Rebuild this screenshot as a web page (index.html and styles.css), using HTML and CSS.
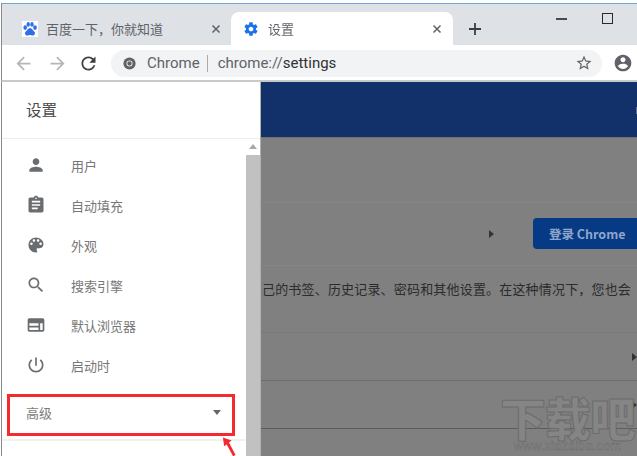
FILE: index.html
```html
<!DOCTYPE html>
<html lang="zh">
<head>
<meta charset="utf-8">
<title>设置</title>
<link rel="stylesheet" href="styles.css">
</head>
<body>
<div class="window">
  <div class="tabstrip">
    <div class="tab tab-inactive">
      <svg class="favicon" viewBox="0 0 16 16"><rect width="16" height="16" fill="#fff"/><g fill="#2f6fe8"><ellipse cx="3.2" cy="6.6" rx="1.8" ry="2.3"/><ellipse cx="6.2" cy="3.4" rx="1.7" ry="2.3"/><ellipse cx="10" cy="3.4" rx="1.7" ry="2.3"/><ellipse cx="13" cy="6.6" rx="1.8" ry="2.3"/><path d="M8 7c-2 0-2.6 2.3-4.2 3.4C2.3 11.6 3 14.6 5.5 14.4c1.2-.1 1.700-.5 2.500-.5s1.300.4 2.500.5c2.500.2 3.200-2.800 1.700-4C10.600 9.300 10 7 8 7z"/></g></svg>
      <span class="tab-title">百度一下，你就知道</span>
      <svg class="tab-close" viewBox="0 0 10 10"><path d="M1.500 1.500l7 7m0-7l-7 7"/></svg>
    </div>
    <div class="tab tab-active">
      <svg class="favicon gear" viewBox="0 0 24 24"><path d="M19.430 12.980c.04-.32.07-.64.07-.98s-.03-.66-.07-.98l2.110-1.650c.19-.15.24-.42.12-.64l-2-3.460c-.12-.22-.39-.3-.61-.22l-2.490 1c-.52-.4-1.080-.73-1.690-.98l-.38-2.650C14.460 2.180 14.250 2 14 2h-4c-.25 0-.46.18-.49.42l-.38 2.650c-.61.25-1.170.59-1.690.98l-2.490-1c-.23-.09-.49 0-.61.22l-2 3.460c-.13.22-.07.49.12.64l2.110 1.650c-.04.32-.07.65-.07.98s.03.66.07.98l-2.110 1.650c-.19.15-.24.42-.12.64l2 3.460c.12.22.39.3.61.22l2.490-1c.52.4 1.080.73 1.690.98l.38 2.650c.03.24.24.42.49.42h4c.25 0 .46-.18.49-.42l.38-2.650c.61-.25 1.170-.59 1.690-.98l2.490 1c.23.09.49 0 .61-.22l2-3.460c.12-.22.07-.49-.12-.64l-2.110-1.650zM12 15.500c-1.930 0-3.500-1.570-3.500-3.500s1.570-3.500 3.500-3.500 3.500 1.570 3.500 3.500-1.570 3.500-3.500 3.500z"/></svg>
      <span class="tab-title">设置</span>
      <svg class="tab-close" viewBox="0 0 10 10"><path d="M1.500 1.500l7 7m0-7l-7 7"/></svg>
    </div>
    <svg class="new-tab" viewBox="0 0 12 12"><path d="M6 0v12M0 6h12"/></svg>
    <div class="win-controls">
      <span class="win-min"></span>
      <span class="win-max"></span>
    </div>
  </div>

  <div class="toolbar">
    <svg class="tool-icon dim back" viewBox="0 0 24 24"><path d="M20 11H7.830l5.590-5.590L12 4l-8 8 8 8 1.410-1.410L7.830 13H20v-2z"/></svg>
    <svg class="tool-icon dim forward" viewBox="0 0 24 24"><path d="M12 4l-1.410 1.410L16.170 11H4v2h12.170l-5.580 5.590L12 20l8-8z"/></svg>
    <svg class="tool-icon" viewBox="0 0 24 24"><path d="M17.650 6.350C16.200 4.900 14.210 4 12 4c-4.420 0-7.990 3.580-7.990 8s3.570 8 7.990 8c3.730 0 6.840-2.550 7.730-6h-2.080c-.82 2.330-3.040 4-5.650 4-3.310 0-6-2.690-6-6s2.690-6 6-6c1.660 0 3.140.69 4.220 1.780L13 11h7V4l-2.350 2.350z"/></svg>
    <div class="omnibox">
      <svg class="chrome-icon" viewBox="0 0 16 16"><circle cx="8" cy="8" r="6.500" fill="#5f6368"/><circle cx="8" cy="8" r="3.200" fill="#f1f3f4"/><circle cx="8" cy="8" r="2.300" fill="#5f6368"/></svg>
      <span class="omni-chip">Chrome</span>
      <span class="omni-sep"></span>
      <span class="omni-url"><span class="omni-scheme">chrome://</span>settings</span>
      <svg class="star" viewBox="0 0 24 24"><path d="M22 9.240l-7.190-.62L12 2 9.190 8.630 2 9.240l5.460 4.730L5.820 21 12 17.270 18.180 21l-1.630-7.030L22 9.240zM12 15.400l-3.760 2.270 1-4.280-3.320-2.880 4.380-.38L12 6.100l1.710 4.040 4.380.38-3.320 2.880 1 4.280L12 15.400z"/></svg>
    </div>
    <svg class="avatar" viewBox="0 0 24 24"><path d="M12 2C6.480 2 2 6.480 2 12s4.480 10 10 10 10-4.480 10-10S17.520 2 12 2zm0 3c1.660 0 3 1.340 3 3s-1.340 3-3 3-3-1.340-3-3 1.340-3 3-3zm0 14.200c-2.500 0-4.710-1.280-6-3.220.03-1.990 4-3.080 6-3.080 1.990 0 5.970 1.090 6 3.080-1.290 1.940-3.500 3.220-6 3.220z"/></svg>
  </div>

  <div class="content">
    <aside class="sidebar">
      <header class="side-head">设置</header>
      <div class="side-body">
        <nav class="side-nav">
          <ul class="menu">
            <li class="menu-item"><svg class="menu-icon" viewBox="0 0 24 24"><path d="M12 12c2.210 0 4-1.790 4-4s-1.790-4-4-4-4 1.790-4 4 1.790 4 4 4zm0 2c-2.670 0-8 1.340-8 4v2h16v-2c0-2.660-5.330-4-8-4z"/></svg><span>用户</span></li>
            <li class="menu-item"><svg class="menu-icon" viewBox="0 0 24 24"><path d="M19 3h-4.180C14.400 1.840 13.300 1 12 1c-1.300 0-2.400.84-2.820 2H5c-1.100 0-2 .9-2 2v14c0 1.100.9 2 2 2h14c1.100 0 2-.9 2-2V5c0-1.100-.9-2-2-2zm-7 0c.55 0 1 .45 1 1s-.45 1-1 1-1-.45-1-1 .45-1 1-1zm2 14H7v-2h7v2zm3-4H7v-2h10v2zm0-4H7V7h10v2z"/></svg><span>自动填充</span></li>
            <li class="menu-item"><svg class="menu-icon" viewBox="0 0 24 24"><path d="M12 3c-4.970 0-9 4.030-9 9s4.030 9 9 9c.83 0 1.500-.67 1.500-1.500 0-.39-.15-.74-.39-1.010-.23-.26-.38-.61-.38-.99 0-.83.67-1.500 1.500-1.500H16c2.760 0 5-2.240 5-5 0-4.420-4.030-8-9-8zm-5.500 9c-.83 0-1.500-.67-1.500-1.500S5.670 9 6.500 9 8 9.670 8 10.500 7.330 12 6.500 12zm3-4C8.670 8 8 7.330 8 6.500S8.670 5 9.500 5s1.500.67 1.500 1.500S10.330 8 9.500 8zm5 0c-.83 0-1.500-.67-1.500-1.500S13.670 5 14.500 5s1.500.67 1.500 1.500S15.330 8 14.500 8zm3 4c-.83 0-1.500-.67-1.500-1.500S16.670 9 17.500 9s1.500.67 1.500 1.500-.67 1.500-1.500 1.500z"/></svg><span>外观</span></li>
            <li class="menu-item"><svg class="menu-icon" viewBox="0 0 24 24"><path d="M15.500 14h-.79l-.28-.27C15.410 12.590 16 11.110 16 9.500 16 5.910 13.090 3 9.500 3S3 5.910 3 9.500 5.910 16 9.500 16c1.610 0 3.090-.59 4.230-1.570l.27.28v.79l5 4.990L20.490 19l-4.990-5zm-6 0C7.010 14 5 11.990 5 9.500S7.010 5 9.500 5 14 7.010 14 9.500 11.990 14 9.500 14z"/></svg><span>搜索引擎</span></li>
            <li class="menu-item"><svg class="menu-icon" viewBox="0 0 24 24"><path fill-rule="evenodd" d="M20 4H4c-1.100 0-2 .9-2 2v12c0 1.100.9 2 2 2h16c1.100 0 2-.9 2-2V6c0-1.100-.9-2-2-2zM4 18v-8h11v3H4v2h11v3H4zm16 0h-3v-8h3v8z"/></svg><span>默认浏览器</span></li>
            <li class="menu-item"><svg class="menu-icon" viewBox="0 0 24 24"><path d="M13 3h-2v10h2V3zm4.830 2.170l-1.420 1.420C17.990 7.860 19 9.810 19 12c0 3.870-3.130 7-7 7s-7-3.130-7-7c0-2.190 1.010-4.140 2.580-5.420L6.170 5.170C4.230 6.820 3 9.260 3 12c0 4.970 4.030 9 9 9s9-4.030 9-9c0-2.740-1.230-5.180-3.170-6.830z"/></svg><span>启动时</span></li>
          </ul>
          <div class="advanced"><span>高级</span><span class="caret"></span></div>
          <div class="side-rule"></div>
        </nav>
        <div class="scrollbar"><span class="scroll-up"></span><span class="scroll-thumb"></span></div>
        <div class="annotation-box"></div>
        <svg class="annotation-arrow" viewBox="0 0 16 22"><path d="M1 0l10 3.500-3 2.300L15.500 20l-2.800 1.600L5.300 8 2.500 10z"/></svg>
      </div>
    </aside>

    <main class="main">
      <div class="main-head"><span class="head-fragment"></span></div>
      <div class="main-body">
        <section class="card">
          <div class="sign-row">
            <span class="arrow-right"></span>
            <span class="row-divider"></span>
            <span class="sign-btn">登录 Chrome</span>
          </div>
          <div class="desc-row">己的书签、历史记录、密码和其他设置。在这种情况下，您也会</div>
          <div class="link-row"><span class="arrow-right"></span></div>
          <div class="link-row last"><span class="arrow-right"></span></div>
        </section>
      </div>
      <div class="watermark">
        <span class="wm-title">下载吧</span>
        <span class="wm-url">www.xiazaiba.com</span>
      </div>
    </main>
  </div>
</div>
</body>
</html>
```

FILE: styles.css
```css
* { box-sizing: border-box; }
html, body { margin: 0; padding: 0; background: #fff; }
body { width: 637px; height: 456px; overflow: hidden; font-family: "Noto Sans CJK SC", "Liberation Sans", sans-serif; }
ul { list-style: none; margin: 0; padding: 0; }

.window {
  width: 637px; height: 456px; overflow: hidden;
  display: flex; flex-direction: column;
  padding: 3px 0 0 1px;
  filter: blur(0.35px);
}

/* tab strip */
.tabstrip {
  height: 42px; flex: none; position: relative;
  display: flex; align-items: flex-end;
  background: #dee1e6;
  border-top: 1px solid #6fa8d8;
  border-left: 1px solid #8a8a8a;
  padding-left: 10px;
}
.tab { height: 33px; display: flex; align-items: center; font-size: 13px; color: #5f6368; }
.tab-inactive { width: 219px; padding: 0 10px; }
.tab-active { width: 222px; padding: 0 11px 0 12px; background: #fff; border-radius: 8px 8px 0 0; }
.favicon { width: 16px; height: 16px; flex: none; margin-right: 8px; }
.gear { fill: #1a73e8; }
.tab-active .favicon { margin-left: 0; margin-right: 9px; }
.tab-title { flex: 1; white-space: nowrap; }
.tab-close { width: 10px; height: 10px; flex: none; fill: none; stroke: #5f6368; stroke-width: 1.500; }
.new-tab { width: 12px; height: 12px; margin: 0 0 10px 16px; fill: none; stroke: #3c4043; stroke-width: 1.800; }
.win-controls { margin-left: auto; align-self: flex-start; display: flex; align-items: center; gap: 35px; padding: 9px 24px 0 0; }
.win-min { width: 11px; height: 2px; background: #4a4a4a; }
.win-max { width: 11px; height: 11px; border: 1.500px solid #2a2a2a; }

/* toolbar */
.toolbar {
  height: 37px; flex: none;
  display: flex; align-items: center;
  background: #fff;
  border-left: 1px solid #8a8a8a;
  border-bottom: 2px solid #c9c9c9;
  padding: 1px 0 0 11px;
}
.tool-icon { width: 21px; height: 21px; flex: none; margin-right: 12px; fill: #3c4043; }
.tool-icon.dim { fill: #b4b6b9; }
.tool-icon.back { margin-right: 13px; }
.tool-icon.forward { margin-right: 10px; }
.omnibox {
  width: 491px; height: 27px; flex: none;
  display: flex; align-items: center;
  background: #f1f3f4; border-radius: 14px;
  padding: 0 9px 0 11px;
  font-family: "Roboto", "Liberation Sans", sans-serif; font-size: 15px; color: #5f6368;
}
.chrome-icon { width: 15px; height: 15px; flex: none; margin-right: 10px; }
.omni-sep { width: 1px; height: 17px; background: #a9abae; margin: 0 10px 0 7px; }
.omni-url { color: #303134; }
.omni-scheme { color: #5f6368; }
.star { width: 18px; height: 18px; margin-left: auto; fill: #5f6368; }
.avatar { width: 20px; height: 20px; flex: none; margin-left: 11px; fill: #5f6368; }

/* body */
.content { flex: 1; min-height: 0; display: flex; }
.sidebar { width: 259px; flex: none; display: flex; flex-direction: column; background: #fff; border-left: 1px solid #8a8a8a; }
.side-head { height: 57px; flex: none; padding: 16px 0 0 24px; font-size: 15.500px; line-height: 22px; color: #4a4a4a; border-bottom: 1px solid #ededed; }
.side-body { flex: 1; min-height: 0; display: flex; position: relative; }
.side-nav { width: 243px; flex: none; padding-top: 6px; }
.menu-item { height: 40px; display: flex; align-items: center; gap: 25px; padding-left: 24px; font-size: 13px; color: #777; }
.menu-icon { width: 20px; height: 20px; flex: none; fill: #6a6d70; }
.advanced { height: 41px; margin: 7px 0 0 0; padding: 0 24px 0 24px; display: flex; align-items: center; justify-content: space-between; font-size: 13px; color: #7c7c7c; }
.caret { width: 0; height: 0; border: 4.500px solid transparent; border-top: 5px solid #666; border-bottom: 0; }
.side-rule { height: 2px; margin-top: 6px; background: #f1f1f1; }
.scrollbar { width: 14px; flex: none; margin-left: 1px; display: flex; flex-direction: column; align-items: center; background: #fff; }
.scroll-up { margin-top: 5px; flex: none; width: 0; height: 0; border: 4px solid transparent; border-bottom: 5px solid #a8a8a8; border-top: 0; }
.scroll-thumb { width: 100%; flex: 1; margin-top: 6px; background: #c1c1c1; }
.annotation-box { position: absolute; left: 5px; top: 255px; width: 228px; height: 42px; border: 3px solid #f42a2f; }
.annotation-arrow { position: absolute; left: 220px; top: 298px; width: 14px; height: 20px; fill: #f42a2f; }

/* dimmed main */
.main { flex: 1; min-width: 0; display: flex; flex-direction: column; position: relative; background: #808080; border-left: 1px solid #b0b0b0; }
.main-head { height: 56px; flex: none; display: flex; align-items: center; justify-content: flex-end; padding-top: 2px; background: #123069; border-bottom: 1px solid #6f6f6f; }
.head-fragment { width: 1px; height: 7px; background: #5f7096; }
.main-body { flex: 1; min-height: 0; padding-top: 64px; }
.card { border-top: 1px solid #858585; font-size: 13px; color: #2b2b2b; }
.sign-row { height: 63px; display: flex; align-items: center; padding-bottom: 1px; border-bottom: 1px solid #858585; }
.sign-row .arrow-right { margin-left: 228px; }
.row-divider { width: 1px; height: 31px; margin-left: 23px; background: #858585; }
.sign-btn { width: 110px; height: 31px; margin-left: 16px; flex: none; display: flex; align-items: center; padding-left: 16px; background: #063a85; border-radius: 4px 0 0 4px; color: #8fa6c9; font-family: "Noto Sans CJK SC", sans-serif; font-weight: 700; font-size: 12.500px; }
.desc-row { height: 67px; padding: 13px 0 0 1px; line-height: 20px; letter-spacing: .18px; white-space: nowrap; border-bottom: 1px solid #7a7a7a; }
.link-row { height: 48px; display: flex; align-items: center; justify-content: flex-end; border-bottom: 1px solid #6e6e6e; }
.link-row.last { border-bottom-color: #5c5c5c; }
.arrow-right { width: 0; height: 0; flex: none; border: 4px solid transparent; border-left: 5px solid #333; border-right: 0; }

/* watermark */
.watermark { position: absolute; left: 237px; top: 310px; width: 139px; display: flex; flex-direction: column; align-items: center; color: #858585; }
.wm-title { font-family: "Noto Sans CJK SC", sans-serif; font-weight: 900; font-size: 46px; line-height: 48px; letter-spacing: -1px; white-space: nowrap; -webkit-text-stroke: 1px #6c6c6c; }
.wm-url { font-family: "Liberation Sans", sans-serif; font-size: 12.500px; line-height: 13px; letter-spacing: .3px; color: #8e8e8e; -webkit-text-stroke: .4px #666; white-space: nowrap; }
```
